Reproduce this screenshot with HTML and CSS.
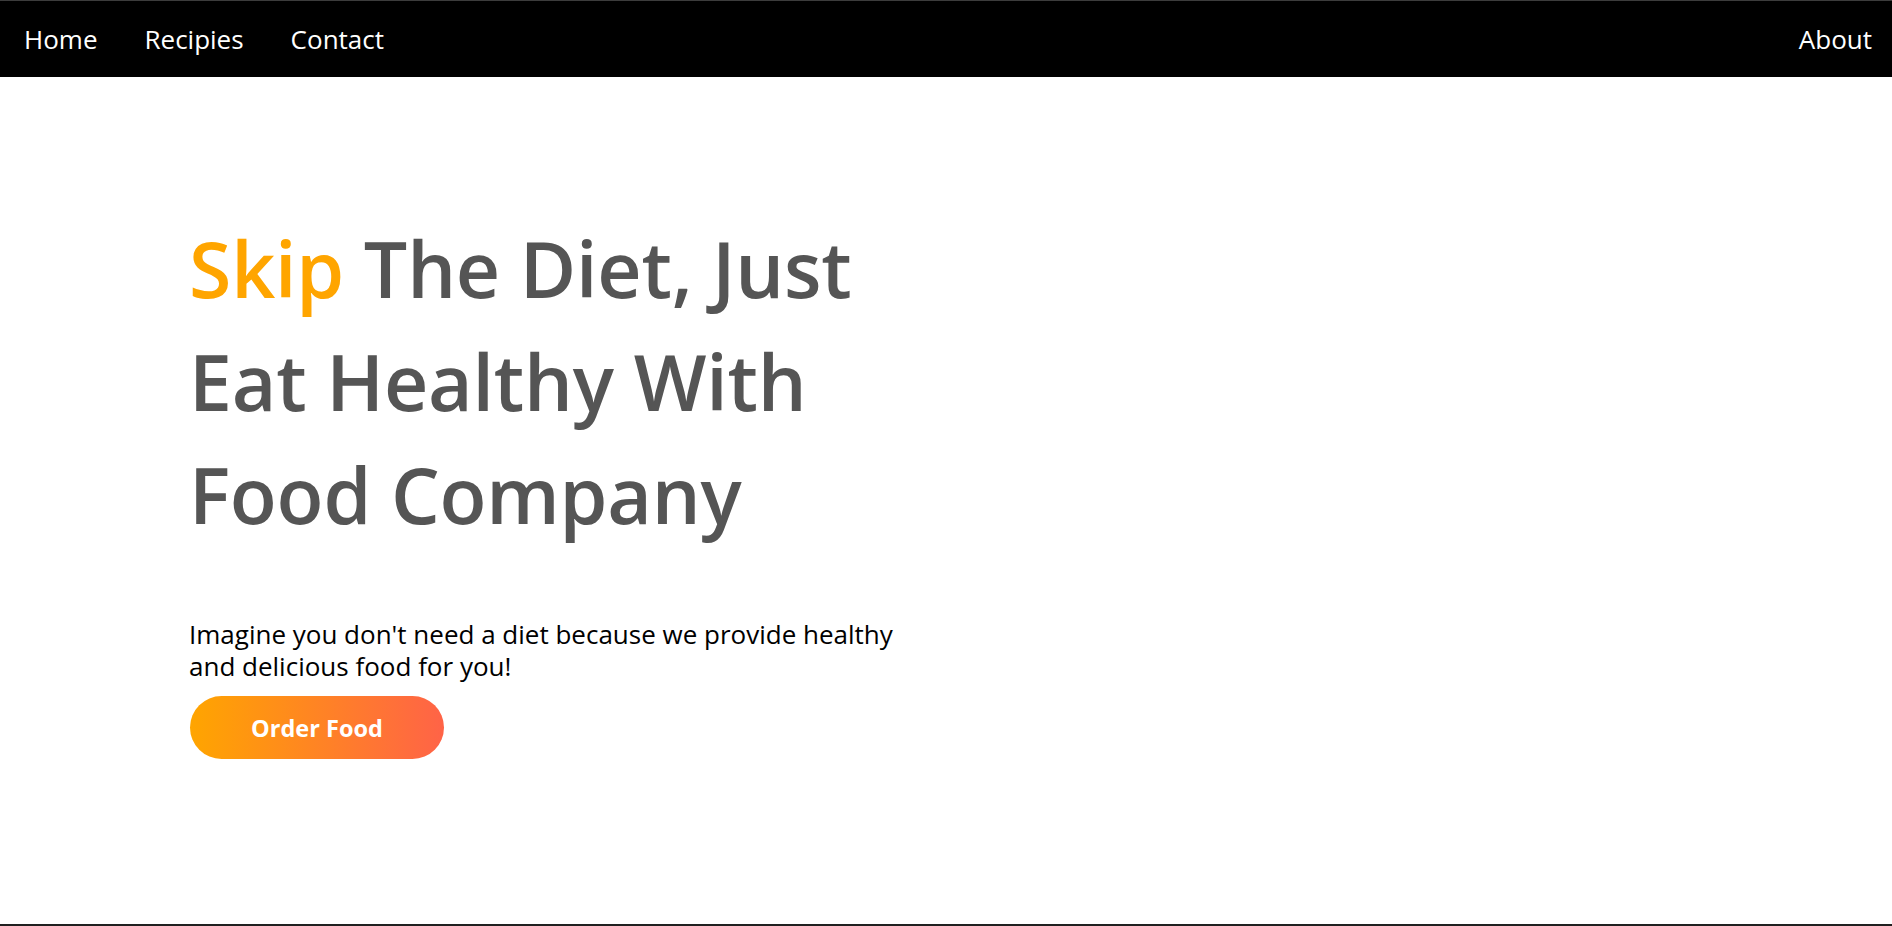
FILE: index.html
```html
<!DOCTYPE html>
<html lang="en">
<head>
<meta charset="utf-8">
<title>Food Company</title>
<link rel="stylesheet" href="styles.css">
</head>
<body>
<div class="frame">
  <nav class="navbar">
    <div class="nav-left">
      <a class="nav-link" href="#">Home</a>
      <a class="nav-link" href="#">Recipies</a>
      <a class="nav-link" href="#">Contact</a>
    </div>
    <a class="nav-link" href="#">About</a>
  </nav>
  <main class="hero">
    <div class="hero-text">
      <h1 class="hero-title"><span class="accent">Skip</span><span class="title-rest"> The Diet, Just Eat Healthy With Food Company</span></h1>
      <p class="hero-desc">Imagine you don't need a diet because we provide healthy and delicious food for you!</p>
      <a class="order-btn" href="#">Order Food</a>
    </div>
  </main>
</div>
</body>
</html>
```
FILE: styles.css
```css
* { box-sizing: border-box; }

html, body {
  margin: 0;
  padding: 0;
  background: #ffffff;
}

body {
  font-family: "Open Sans", "Liberation Sans", sans-serif;
}

.frame {
  height: 926px;
  display: flex;
  flex-direction: column;
  border-top: 1px solid #3c3c3c;
  border-bottom: 2px solid #202020;
  overflow: hidden;
}

.navbar {
  height: 76px;
  flex: none;
  background: #000000;
  display: flex;
  align-items: center;
  justify-content: space-between;
  padding: 0 20px 0 24px;
}

.nav-left {
  display: flex;
  align-items: center;
  gap: 47px;
}

.nav-link {
  color: #ffffff;
  text-decoration: none;
  font-size: 26px;
  line-height: 36px;
  font-weight: 400;
}

.hero {
  flex: 1;
  padding: 135px 0 0 189px;
}

.hero-text {
  width: 720px;
}

.hero-title {
  margin: 0;
  font-size: 77px;
  line-height: 113px;
  font-weight: 600;
  letter-spacing: -0.2px;
  color: #555555;
}

.accent {
  color: #ffa500;
}

.title-rest {
  color: #555555;
}

.hero-desc {
  margin: 67px 0 0;
  font-size: 26px;
  line-height: 32px;
  color: #000000;
}

.order-btn {
  margin-top: 14px;
  margin-left: 1px;
  width: 254px;
  height: 63px;
  border-radius: 32px;
  background: linear-gradient(to right, #ffa500, #ff6347);
  color: #ffffff;
  text-decoration: none;
  font-size: 23.5px;
  font-weight: 700;
  display: flex;
  align-items: center;
  justify-content: center;
}
```
